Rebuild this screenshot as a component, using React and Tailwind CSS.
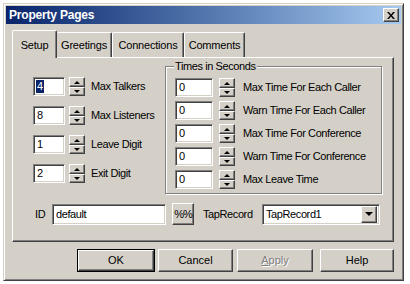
import React from "react";

const raised =
  "border border-t-white border-l-white border-r-[#404040] border-b-[#404040] shadow-[inset_-1px_-1px_#808080]";
const sunken =
  "border border-t-[#808080] border-l-[#808080] border-r-white border-b-white shadow-[inset_1px_1px_#404040,inset_-1px_-1px_#d4d0c8]";

function Arrow({ up }) {
  return up ? (
    <span className="block w-0 h-0 border-x-[3px] border-x-transparent border-b-[3px] border-b-black" />
  ) : (
    <span className="block w-0 h-0 border-x-[3px] border-x-transparent border-t-[3px] border-t-black" />
  );
}

function Spin() {
  return (
    <div className="flex flex-col w-[16px] h-[19px]">
      <div className={`${raised} h-[10px] flex items-center justify-center bg-[#d4d0c8]`}>
        <Arrow up />
      </div>
      <div className={`${raised} h-[9px] flex items-center justify-center bg-[#d4d0c8]`}>
        <Arrow />
      </div>
    </div>
  );
}

function Field({ value, width, selected }) {
  return (
    <div className={`${sunken} bg-white h-[19px] ${width} flex items-center pl-[2px]`}>
      {selected ? (
        <span className="bg-[#0a246a] text-white px-[1px] leading-[13px]">{value}</span>
      ) : (
        <span className="px-[1px]">{value}</span>
      )}
    </div>
  );
}

const leftRows = [
  ["4", "Max Talkers", true],
  ["8", "Max Listeners"],
  ["1", "Leave Digit"],
  ["2", "Exit Digit"],
];

const timeRows = [
  "Max Time For Each Caller",
  "Warn Time For Each Caller",
  "Max Time For Conference",
  "Warn Time For Conference",
  "Max Leave Time",
];

export default function App() {
  return (
    <div className="w-[410px] h-[284px] bg-white pt-[3px] pl-[3px] font-['Liberation_Sans',Arial,sans-serif] text-[11px] text-black">
      <div className="w-[401px] h-[278px] bg-[#d4d0c8] border border-t-[#d4d0c8] border-l-[#d4d0c8] border-r-[#404040] border-b-[#404040] shadow-[inset_1px_1px_#fff,inset_-1px_-1px_#808080] p-[2px] flex flex-col">
        {/* title bar */}
        <div className="h-[18px] flex items-center justify-between bg-gradient-to-r from-[#0a246a] to-[#a6caf0] pl-[3px] pr-[2px]">
          <span className="text-white font-bold text-[12px] tracking-[-0.2px]">Property Pages</span>
          <div className={`${raised} bg-[#d4d0c8] w-[16px] h-[14px] flex items-center justify-center`}>
            <svg width="8" height="7" viewBox="0 0 8 7">
              <path d="M0 0h2l2 2.5L6 0h2L5 3.5 8 7H6L4 4.5 2 7H0l3-3.5z" fill="#000" />
            </svg>
          </div>
        </div>

        <div className="px-[6px] pt-[6px] flex flex-col">
          {/* tabs */}
          <div className="flex items-end h-[27px] tracking-[-0.2px]">
            <div className="relative z-10 -mb-px h-[28px] w-[45px] bg-[#d4d0c8] border-t border-l border-t-white border-l-white border-r border-r-[#404040] shadow-[inset_-1px_0_#808080] rounded-t-[2px] flex items-start justify-center pt-[6px]">
              Setup
            </div>
            <div className="h-[25px] w-[55px] border-t border-t-white border-r border-r-[#404040] shadow-[inset_-1px_0_#808080] rounded-t-[2px] flex items-start justify-center pt-[4px]">
              Greetings
            </div>
            <div className="h-[25px] w-[72px] border-t border-l border-t-white border-l-white border-r border-r-[#404040] shadow-[inset_-1px_0_#808080] rounded-t-[2px] flex items-start justify-center pt-[4px]">
              Connections
            </div>
            <div className="h-[25px] w-[61px] border-t border-l border-t-white border-l-white border-r border-r-[#404040] shadow-[inset_-1px_0_#808080] rounded-t-[2px] flex items-start justify-center pt-[4px]">
              Comments
            </div>
          </div>

          {/* panel */}
          <div className="h-[185px] w-[382px] border border-t-white border-l-white border-r-[#404040] border-b-[#404040] shadow-[inset_-1px_-1px_#808080] pl-[20px] pt-[8px] tracking-[-0.4px]">
            <div className="flex">
              <div className="w-[132px] pt-[11px] flex flex-col gap-[10px]">
                {leftRows.map(([v, label, sel]) => (
                  <div key={label} className="flex items-center h-[19px]">
                    <Field value={v} width="w-[32px]" selected={sel} />
                    <div className="ml-[4px]">
                      <Spin />
                    </div>
                    <span className="ml-[6px]">{label}</span>
                  </div>
                ))}
              </div>

              <div className="relative w-[217px] h-[128px] border border-[#808080] shadow-[inset_1px_1px_#fff,1px_1px_#fff] pl-[9px] pt-[11px] flex flex-col gap-[4px]">
                <span className="absolute -top-[8px] left-[8px] bg-[#d4d0c8] px-[1px] leading-[14px]">
                  Times in Seconds
                </span>
                {timeRows.map((label) => (
                  <div key={label} className="flex items-center h-[19px]">
                    <Field value="0" width="w-[38px]" />
                    <div className="ml-[6px]">
                      <Spin />
                    </div>
                    <span className="ml-[8px]">{label}</span>
                  </div>
                ))}
              </div>
            </div>

            {/* ID row */}
            <div className="flex items-center mt-[9px] h-[22px]">
              <span className="ml-[2px] w-[17px]">ID</span>
              <div className={`${sunken} bg-white h-[21px] w-[114px] flex items-center pl-[3px]`}>default</div>
              <div className={`${raised} bg-[#d4d0c8] ml-[6px] w-[22px] h-[22px] flex items-center justify-center tracking-[-1px]`}>
                %%
              </div>
              <span className="ml-[9px] w-[59px]">TapRecord</span>
              <div className={`${sunken} bg-white h-[21px] w-[118px] flex items-center justify-between pl-[3px] pr-[2px]`}>
                <span>TapRecord1</span>
                <div className={`${raised} bg-[#d4d0c8] w-[16px] h-[17px] flex items-center justify-center`}>
                  <span className="block w-0 h-0 border-x-[4px] border-x-transparent border-t-[4px] border-t-black" />
                </div>
              </div>
            </div>
          </div>

          {/* buttons */}
          <div className="flex justify-end mt-[7px] pr-[1px]">
            <div className="border border-black">
              <div className={`${raised} bg-[#d4d0c8] w-[76px] h-[21px] flex items-center justify-center`}>OK</div>
            </div>
            <div className={`${raised} bg-[#d4d0c8] ml-[3px] w-[75px] h-[23px] flex items-center justify-center`}>Cancel</div>
            <div className={`${raised} bg-[#d4d0c8] ml-[4px] w-[76px] h-[23px] flex items-center justify-center text-[#808080] [text-shadow:1px_1px_#fff]`}>
              <span>
                <span className="underline">A</span>pply
              </span>
            </div>
            <div className={`${raised} bg-[#d4d0c8] ml-[7px] w-[74px] h-[23px] flex items-center justify-center`}>Help</div>
          </div>
        </div>
      </div>
    </div>
  );
}
